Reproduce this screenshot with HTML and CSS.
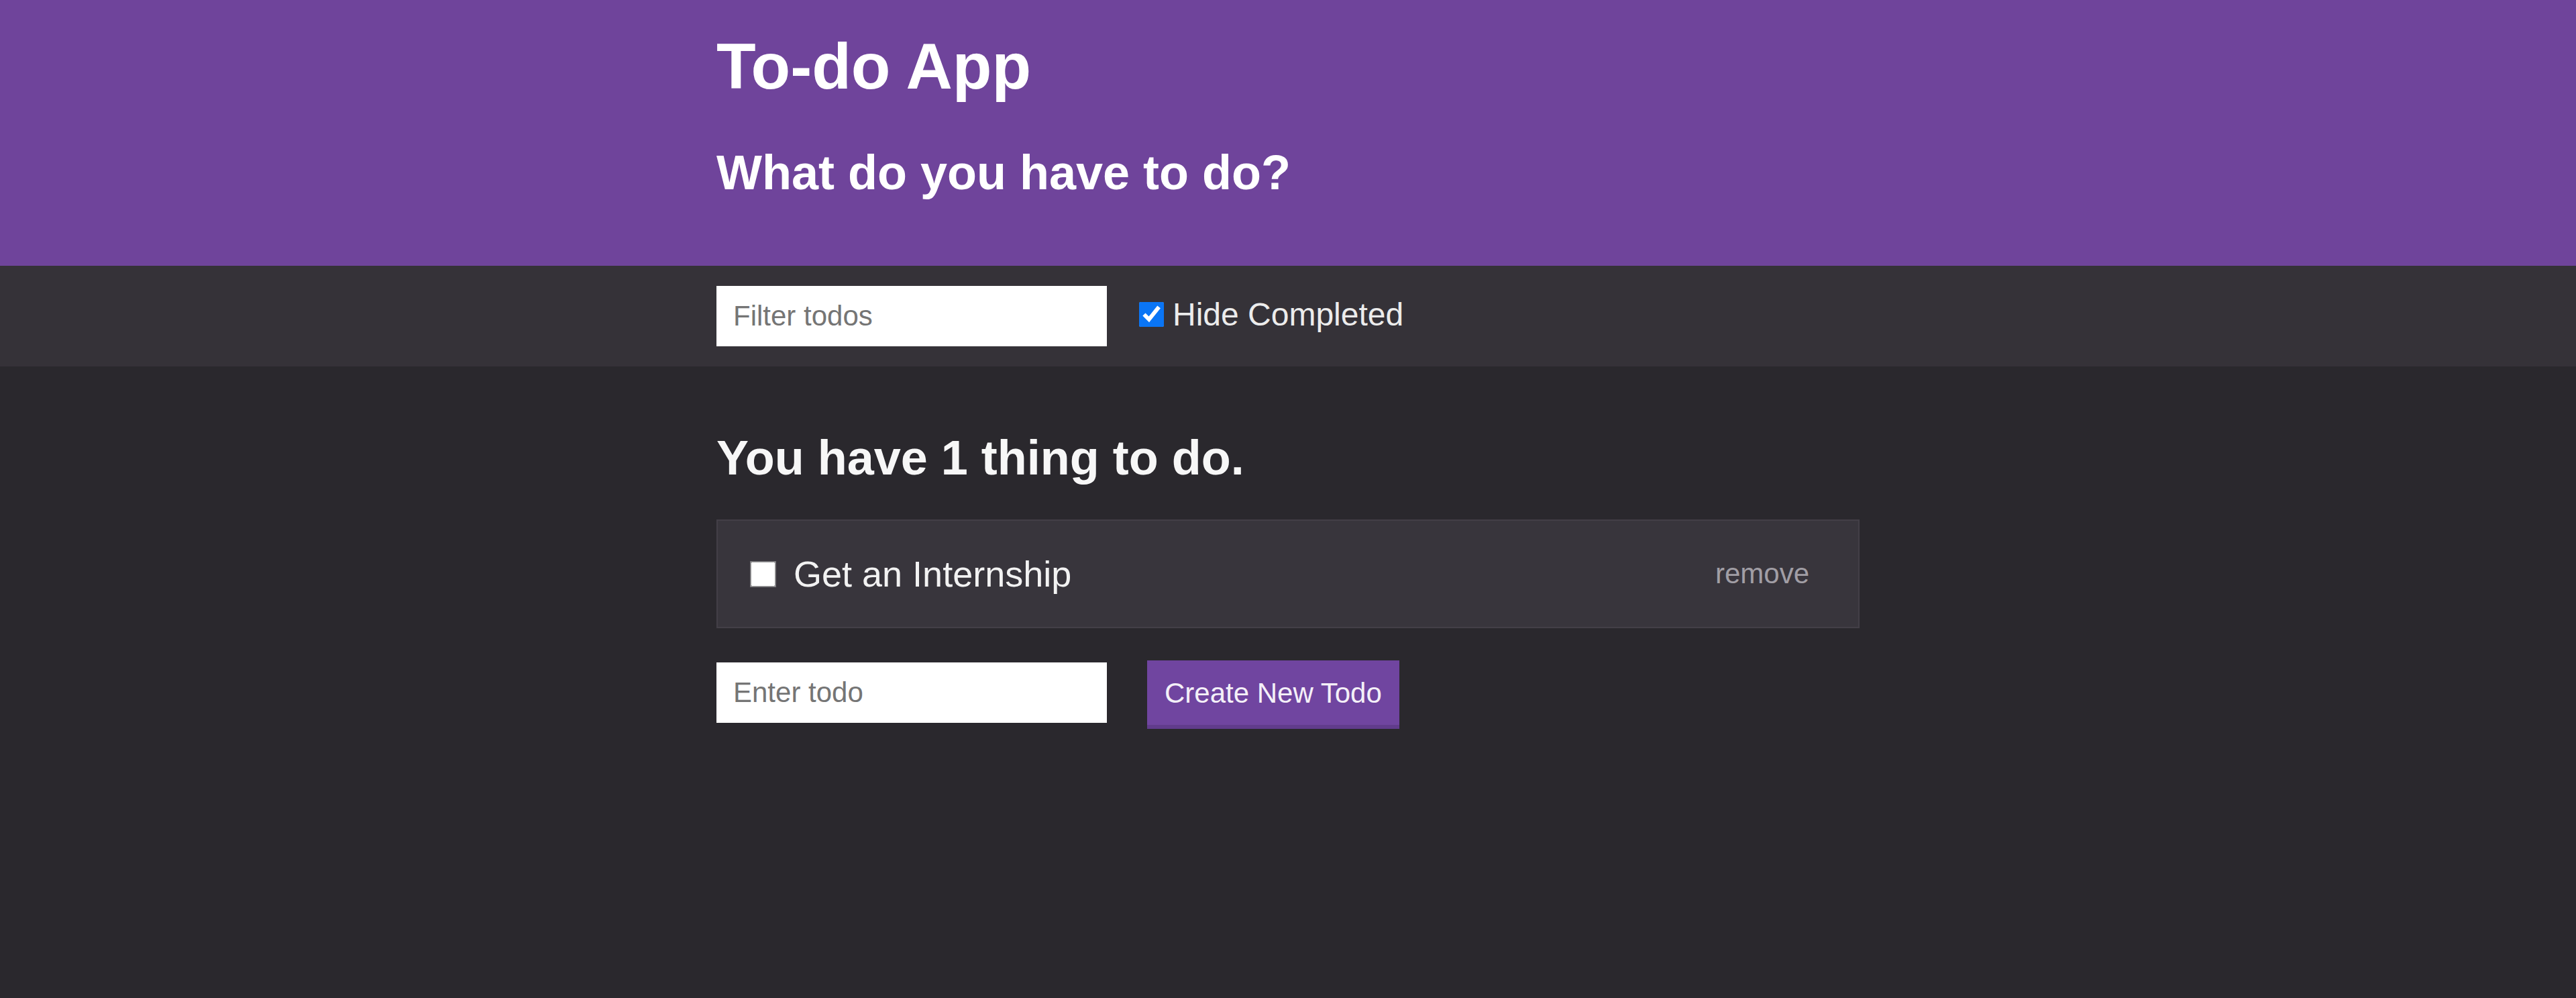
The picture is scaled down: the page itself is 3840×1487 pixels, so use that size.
FILE: index.html
```html
<!DOCTYPE html>
<html lang="en">
<head>
<meta charset="utf-8">
<title>To-do App</title>
<link rel="stylesheet" href="styles.css">
</head>
<body>
<header class="header">
  <div class="container">
    <h1 class="title">To-do App</h1>
    <h2 class="subtitle">What do you have to do?</h2>
  </div>
</header>
<section class="filter-bar">
  <div class="container filter-row">
    <input class="text-input" type="text" placeholder="Filter todos">
    <label class="hide-label"><input class="check" type="checkbox" checked><span>Hide Completed</span></label>
  </div>
</section>
<main class="main">
  <div class="container">
    <h2 class="count">You have 1 thing to do.</h2>
    <ul class="todo-list">
      <li class="todo-item">
        <label class="todo-label"><input class="check" type="checkbox"><span>Get an Internship</span></label>
        <button class="remove" type="button">remove</button>
      </li>
    </ul>
    <form class="new-row">
      <input class="text-input new-input" type="text" placeholder="Enter todo">
      <button class="create" type="button">Create New Todo</button>
    </form>
  </div>
</main>
</body>
</html>
```
FILE: styles.css
```css
html, body {
  margin: 0;
  padding: 0;
}
body {
  background: #2a282d;
  font-family: "Liberation Sans", Arial, sans-serif;
  color: #f2f2f2;
  min-height: 100vh;
}
.container {
  width: 1704px;
  margin: 0 auto;
}
.header {
  background: #6f449b;
  padding: 49px 0 99px;
  color: #ffffff;
}
.title {
  margin: 0;
  font-size: 96px;
  line-height: 100px;
  font-weight: bold;
}
.subtitle {
  margin: 68px 0 0;
  font-size: 72px;
  line-height: 80px;
  font-weight: bold;
}
.filter-bar {
  background: #353238;
  padding: 30px 0;
}
.filter-row {
  display: flex;
  align-items: center;
}
.text-input {
  box-sizing: border-box;
  width: 582px;
  height: 90px;
  border: none;
  outline: none;
  background: #ffffff;
  padding: 0 25px;
  font-family: "Liberation Sans", Arial, sans-serif;
  font-size: 42px;
  color: #333333;
  border-radius: 0;
}
.text-input::placeholder {
  color: #757575;
}
.hide-label {
  display: flex;
  align-items: center;
  gap: 13px;
  margin-left: 48px;
  margin-bottom: 5px;
  font-size: 48px;
  line-height: 56px;
  color: #ececec;
}
.check {
  width: 37px;
  height: 37px;
  margin: 0;
  accent-color: #0a75f5;
  flex: none;
}
.todo-item .check {
  border-radius: 3px;
  outline: 2px solid rgba(200, 200, 200, 0.45);
  outline-offset: -1px;
}
.main {
  padding: 96px 0 0;
}
.count {
  margin: 0;
  font-size: 72px;
  line-height: 80px;
  font-weight: bold;
  color: #f7f7f7;
}
.todo-list {
  list-style: none;
  margin: 52px 0 0;
  padding: 0;
}
.todo-item {
  box-sizing: border-box;
  height: 162px;
  display: flex;
  align-items: center;
  justify-content: space-between;
  background: #38353c;
  border: 2px solid #433f47;
  padding: 0 73px 0 49px;
}
.todo-label {
  display: flex;
  align-items: center;
  gap: 27px;
  font-size: 54px;
  line-height: 60px;
  color: #f2f2f2;
}
.remove {
  background: none;
  border: none;
  padding: 0;
  font-family: "Liberation Sans", Arial, sans-serif;
  font-size: 42px;
  line-height: 50px;
  color: #a19ea5;
  cursor: pointer;
}
.new-row {
  display: flex;
  align-items: flex-start;
  margin-top: 48px;
}
.new-input {
  margin-top: 3px;
}
.create {
  margin-left: 60px;
  background: #7045a0;
  color: #f4f0f8;
  border: none;
  border-bottom: 6px solid #613c8c;
  padding: 24px 26px 22px;
  font-family: "Liberation Sans", Arial, sans-serif;
  font-size: 42px;
  line-height: 50px;
  border-radius: 0;
  cursor: pointer;
}
```
